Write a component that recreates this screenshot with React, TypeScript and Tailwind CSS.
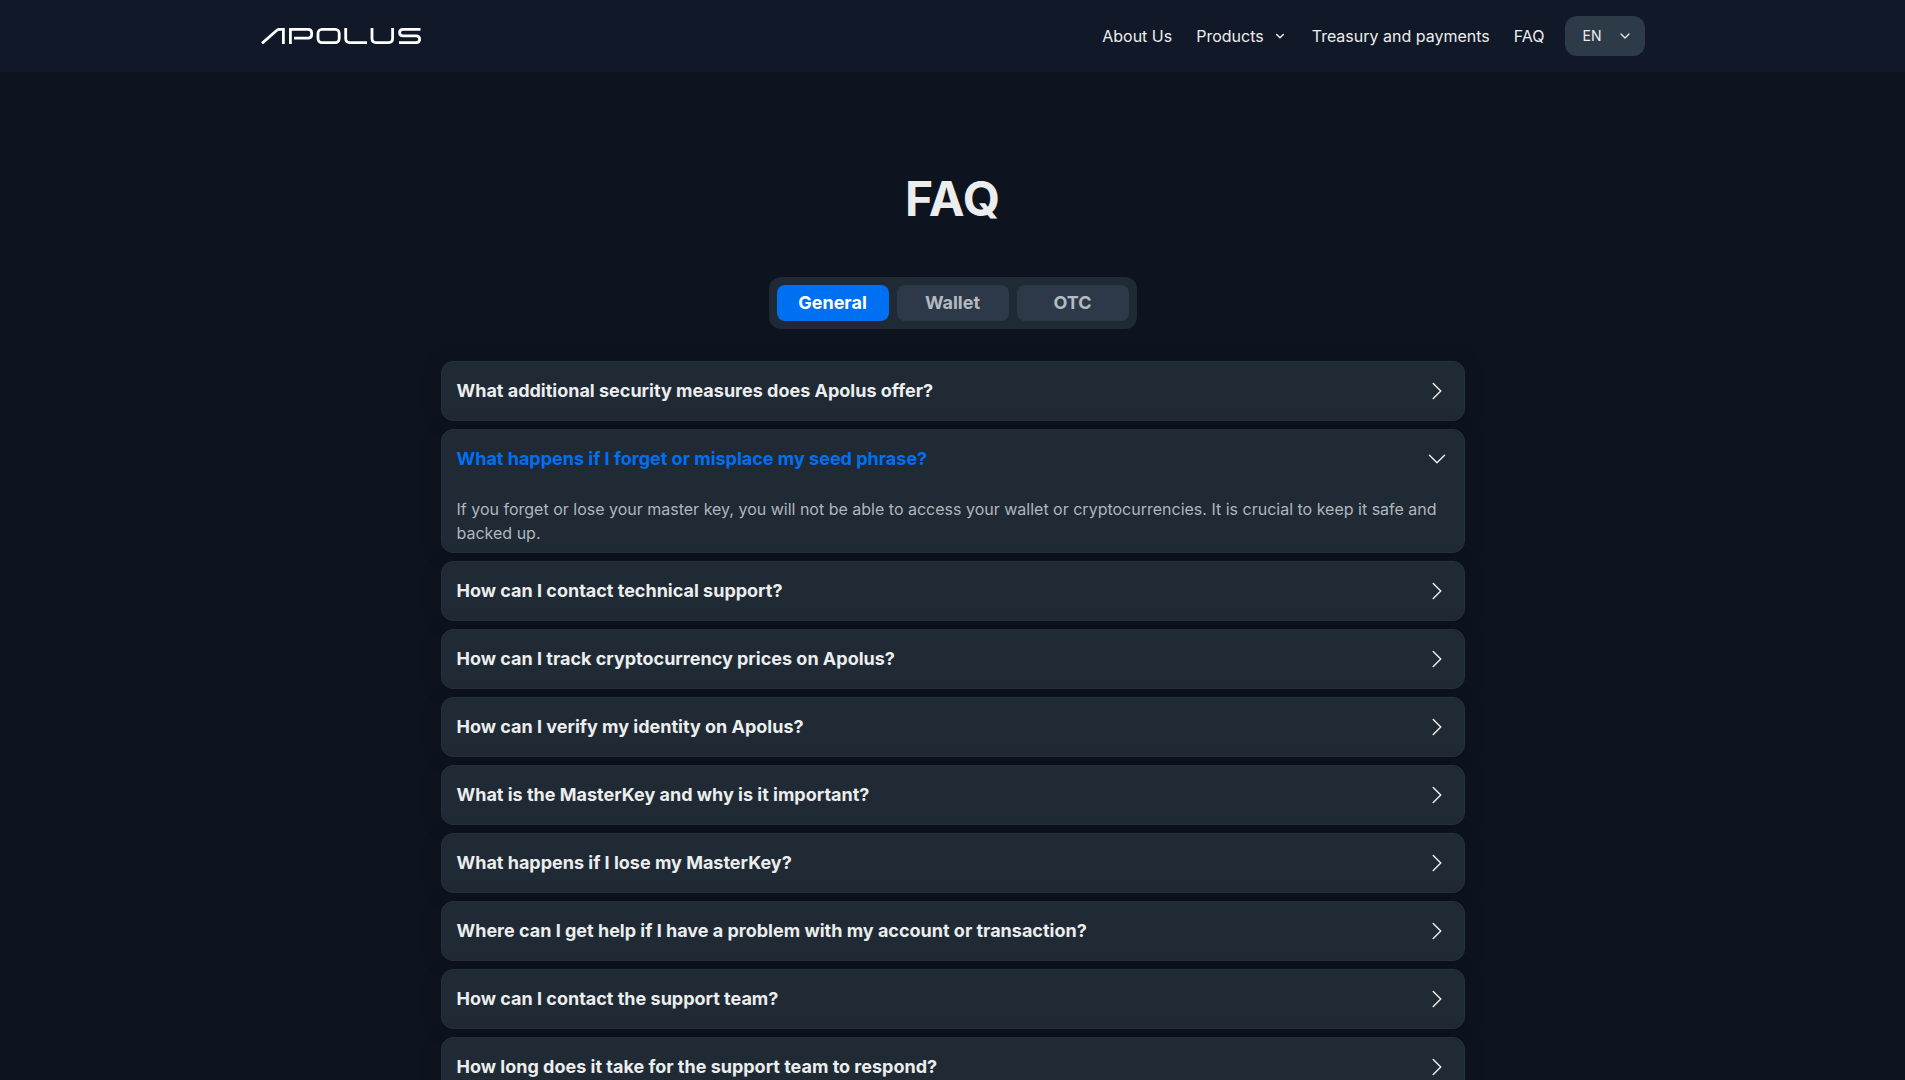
import { useState } from "react";

const tabs = ["General", "Wallet", "OTC"];

const answer =
  "If you forget or lose your master key, you will not be able to access your wallet or cryptocurrencies. It is crucial to keep it safe and backed up.";

const questions = [
  "What additional security measures does Apolus offer?",
  "What happens if I forget or misplace my seed phrase?",
  "How can I contact technical support?",
  "How can I track cryptocurrency prices on Apolus?",
  "How can I verify my identity on Apolus?",
  "What is the MasterKey and why is it important?",
  "What happens if I lose my MasterKey?",
  "Where can I get help if I have a problem with my account or transaction?",
  "How can I contact the support team?",
  "How long does it take for the support team to respond?",
];

function Logo() {
  return (
    <svg width="160" height="16" viewBox="0 0 160 16" fill="none" stroke="currentColor" strokeWidth="2.8" aria-hidden="true">
      <path d="M1 15.4 L15.6 2.5 Q16.9 1.4 18.6 1.4 H22.4 V16" />
      <path d="M29.4 16 V1.4 H47 Q50.6 1.4 50.6 4.8 V6.8 Q50.6 10.2 47 10.2 H33" />
      <rect x="57" y="1.4" width="21.2" height="13.2" rx="4" />
      <path d="M84.7 0 V10.6 Q84.7 14.6 88.7 14.6 H106" />
      <path d="M111 0 V10.6 Q111 14.6 115 14.6 H127.6 Q131.6 14.6 131.6 10.6 V0" />
      <path d="M159.5 1.4 H142 Q138.6 1.4 138.6 4.5 Q138.6 7.8 142 7.8 H155.2 Q158.6 7.8 158.6 11.2 Q158.6 14.6 155.2 14.6 H138" />
    </svg>
  );
}

function ProductsChevron() {
  return (
    <svg className="size-4" viewBox="0 0 16 16" fill="none" stroke="currentColor" strokeWidth="1.5" strokeLinecap="round" strokeLinejoin="round" aria-hidden="true">
      <path d="M4.7 6.5 L8 9.8 L11.3 6.5" />
    </svg>
  );
}

function LanguageChevron() {
  return (
    <svg className="size-4" viewBox="0 0 16 16" fill="none" stroke="currentColor" strokeWidth="1.3" strokeLinecap="round" strokeLinejoin="round" aria-hidden="true">
      <path d="M4 6 L8 10 L12 6" />
    </svg>
  );
}

function ItemChevron({ open }: { open: boolean }) {
  return (
    <svg className="size-6 shrink-0" viewBox="0 0 24 24" fill="none" stroke="currentColor" strokeWidth="1.5" strokeLinecap="round" strokeLinejoin="round" aria-hidden="true">
      <path d={open ? "M4.5 8.25 L12 15.75 L19.5 8.25" : "M8.25 4.5 L15.75 12 L8.25 19.5"} />
    </svg>
  );
}

export default function App() {
  const [tab, setTab] = useState("General");
  const [open, setOpen] = useState(1);

  return (
    <div className="h-screen overflow-hidden bg-[#0e141f] font-['Inter',sans-serif] text-[#eceded]">
      <header className="bg-[#111827]">
        <div className="mx-auto flex h-18 w-full max-w-[1384px] items-center justify-between">
          <a href="#" aria-label="Apolus" className="text-white">
            <Logo />
          </a>
          <div className="flex items-center gap-5">
            <nav className="flex items-center gap-6">
              <a href="#about">About Us</a>
              <button type="button" className="flex items-center gap-2">
                Products
                <ProductsChevron />
              </button>
              <a href="#treasury">Treasury and payments</a>
              <a href="#faq">FAQ</a>
            </nav>
            <button type="button" className="flex h-10 w-20 items-center justify-between rounded-xl bg-[#2d3b49] pr-3 pl-[18px] text-sm">
              EN
              <LanguageChevron />
            </button>
          </div>
        </div>
      </header>

      <main className="mx-auto flex w-full max-w-5xl flex-col items-center pt-24">
        <h1 className="text-5xl leading-[62px] font-bold">FAQ</h1>
        <div role="tablist" className="mt-[47px] flex gap-2 rounded-xl bg-[#1f2a35] p-2">
          {tabs.map((name) => (
            <button
              key={name}
              type="button"
              role="tab"
              aria-selected={tab === name}
              onClick={() => setTab(name)}
              className={
                "h-9 w-28 rounded-lg text-lg font-bold " +
                (tab === name ? "bg-[#0070f3] text-white" : "bg-[#2d3948] text-[#b4bac1]")
              }
            >
              {name}
            </button>
          ))}
        </div>

        <div className="mt-8 flex w-full flex-col gap-2">
          {questions.map((question, index) => (
            <section key={question} className="rounded-xl border border-[#25313c] bg-[#1f2a35] shadow-[0_2px_20px_rgba(0,0,0,0.2)]">
              <h2>
                <button
                  type="button"
                  aria-expanded={open === index}
                  onClick={() => setOpen(open === index ? -1 : index)}
                  className="flex h-[58px] w-full items-center justify-between px-[15px] text-left text-lg font-bold"
                >
                  <span className={open === index ? "text-[#0070f3]" : ""}>{question}</span>
                  <ItemChevron open={open === index} />
                </button>
              </h2>
              {open === index && <p className="px-[15px] pt-[9px] pb-[7px] text-[#b0b6bd]">{answer}</p>}
            </section>
          ))}
        </div>
      </main>
    </div>
  );
}
